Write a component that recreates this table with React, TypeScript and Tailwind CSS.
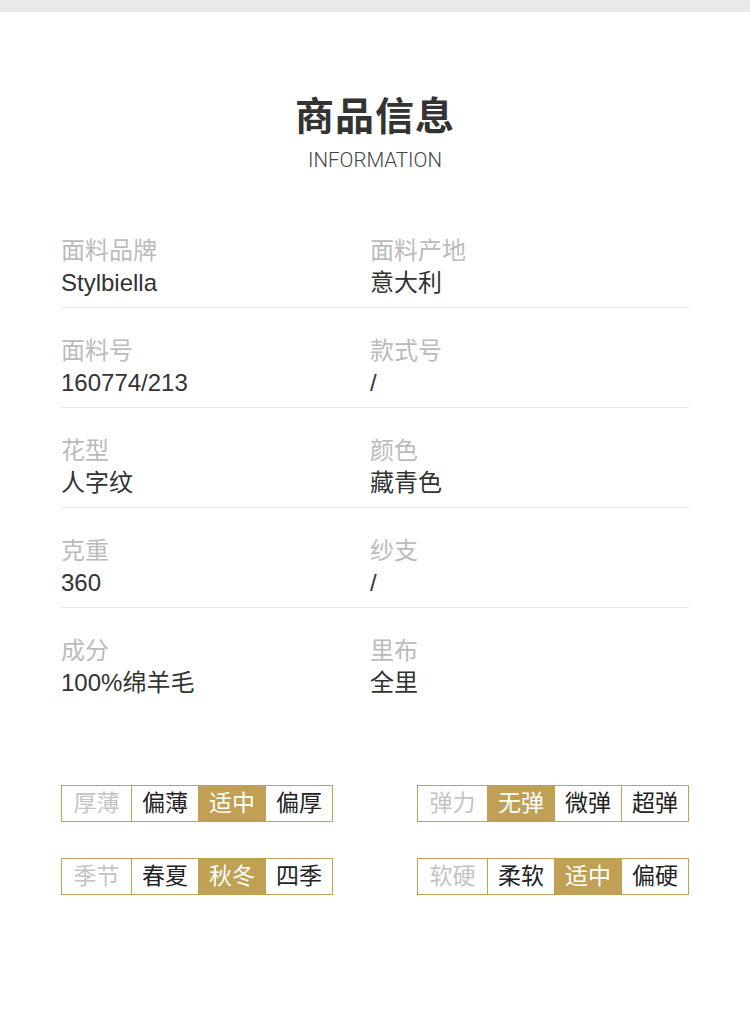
import React from "react";

const rows: [string, string, string, string][] = [
    ["面料品牌", "Stylbiella", "面料产地", "意大利"],
    ["面料号", "160774/213", "款式号", "/"],
    ["花型", "人字纹", "颜色", "藏青色"],
    ["克重", "360", "纱支", "/"],
    ["成分", "100%绵羊毛", "里布", "全里"],
];

const groups: { label: string; options: string[]; active: number }[][] = [
    [
        { label: "厚薄", options: ["偏薄", "适中", "偏厚"], active: 1 },
        { label: "弹力", options: ["无弹", "微弹", "超弹"], active: 0 },
    ],
    [
        { label: "季节", options: ["春夏", "秋冬", "四季"], active: 1 },
        { label: "软硬", options: ["柔软", "适中", "偏硬"], active: 1 },
    ],
];

const font = { fontFamily: '"Liberation Sans", "Noto Sans CJK SC", sans-serif' };

const InfoCell = ({ label, value }: { label: string; value: string }) => (
    <div>
        <div className="text-[24px] leading-[32px] text-[#bbbbbb]">{label}</div>
        <div className="text-[24px] leading-[32px] text-[#333333]">{value}</div>
    </div>
);

const TagGroup = ({ label, options, active }: { label: string; options: string[]; active: number }) => (
    <div className="flex w-[272px] h-[37px] border border-[#c0a055]">
        <div className="w-[70px] flex items-center justify-center text-[23px] text-[#c4c4c4] border-r border-[#c0a055]">
            {label}
        </div>
        {options.map((o, i) => (
            <div
                key={o}
                className={
                    "flex-1 flex items-center justify-center text-[23px] " +
                    (i < options.length - 1 ? "border-r border-[#c0a055] " : "") +
                    (i === active ? "bg-[#c0a055] text-white" : "text-[#222222]")
                }
            >
                {o}
            </div>
        ))}
    </div>
);

export default function App() {
    return (
        <div className="min-h-[1023px] bg-white" style={font}>
            <div className="h-[12px] bg-[#e9e9e9]" />

            {/* Title */}
            <div className="pt-[81px] flex flex-col items-center">
                <h1 className="text-[39px] leading-[48px] font-bold text-[#333333] tracking-[1px]">商品信息</h1>
                <p
                    className="mt-[7px] text-[20.5px] leading-[24px] font-light text-[#444444]"
                    style={{ fontFamily: 'Roboto, "Liberation Sans", sans-serif' }}
                >
                    INFORMATION
                </p>
            </div>

            {/* Info table */}
            <div className="px-[61px] mt-[36px]">
                {rows.map((r, i) => (
                    <div
                        key={r[0]}
                        className={
                            "grid grid-cols-[309px_1fr] pt-[27px] pb-[8px] " +
                            (i < rows.length - 1 ? "border-b border-[#e8e8e8]" : "")
                        }
                    >
                        <InfoCell label={r[0]} value={r[1]} />
                        <InfoCell label={r[2]} value={r[3]} />
                    </div>
                ))}
            </div>

            {/* Tags */}
            <div className="px-[61px] mt-[78px] flex flex-col gap-[36px]">
                {groups.map((g, i) => (
                    <div key={i} className="flex justify-between">
                        {g.map((t) => (
                            <TagGroup key={t.label} {...t} />
                        ))}
                    </div>
                ))}
            </div>
        </div>
    );
}
